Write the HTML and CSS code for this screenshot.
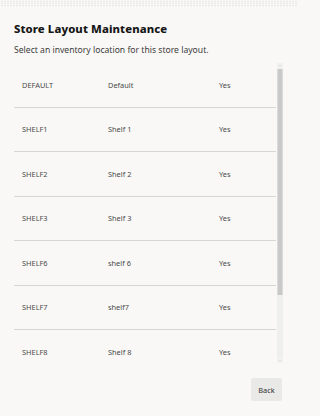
FILE: index.html
```html
<!DOCTYPE html>
<html>
<head>
<meta charset="utf-8">
<link rel="stylesheet" href="styles.css">
</head>
<body>
<div class="strip"></div>
<div class="page">
  <h1 class="title">Store Layout Maintenance</h1>
  <p class="subtitle">Select an inventory location for this store layout.</p>
  <div class="listwrap">
    <div class="list">
      <div class="row"><span class="c1">DEFAULT</span><span class="c2">Default</span><span class="c3">Yes</span></div>
      <div class="row"><span class="c1">SHELF1</span><span class="c2">Shelf 1</span><span class="c3">Yes</span></div>
      <div class="row"><span class="c1">SHELF2</span><span class="c2">Shelf 2</span><span class="c3">Yes</span></div>
      <div class="row"><span class="c1">SHELF3</span><span class="c2">Shelf 3</span><span class="c3">Yes</span></div>
      <div class="row"><span class="c1">SHELF6</span><span class="c2">shelf 6</span><span class="c3">Yes</span></div>
      <div class="row"><span class="c1">SHELF7</span><span class="c2">shelf7</span><span class="c3">Yes</span></div>
      <div class="row"><span class="c1">SHELF8</span><span class="c2">Shelf 8</span><span class="c3">Yes</span></div>
    </div>
    <div class="scrollbar">
      <div class="sbtn up"></div>
      <div class="track"><div class="thumb"></div></div>
      <div class="sbtn down"></div>
    </div>
  </div>
  <div class="actions">
    <button class="back">Back</button>
  </div>
</div>
</body>
</html>
```
FILE: styles.css
```css
html, body {
  margin: 0;
  padding: 0;
}
html {
  background: #f9f8f6;
}
body {
  background: #f9f8f6;
  font-family: "Noto Sans", "Open Sans", sans-serif;
  color: #333;
  width: 297px;
  height: 416px;
  overflow: hidden;
}
.strip {
  height: 7px;
  background-color: #ebeae8;
  background-image: repeating-linear-gradient(90deg, rgba(255,255,255,0.6) 0 1px, transparent 1px 3px),
                    repeating-linear-gradient(0deg, rgba(255,255,255,0.5) 0 1px, transparent 1px 2px);
}
.page {
  padding: 0 14px 0 14px;
}
.title {
  margin: 14px 0 0 0;
  font-size: 11.3px;
  font-weight: 800;
  color: #161616;
  line-height: 16px;
  letter-spacing: 0.1px;
}
.subtitle {
  margin: 7px 0 0 0;
  font-size: 8.6px;
  line-height: 12px;
  color: #3c3c3c;
}
.listwrap {
  margin-top: 7px;
  display: flex;
  height: 300px;
}
.list {
  flex: 1;
  overflow: hidden;
}
.row {
  display: flex;
  align-items: center;
  height: 43.5px;
  border-bottom: 1px solid #d6d6d4;
  font-size: 7.4px;
  color: #4a4a4a;
}
.c1 {
  width: 86px;
  padding-left: 8px;
}
.c2 {
  width: 111px;
}
.c3 {
  flex: 1;
}
.scrollbar {
  width: 6px;
  margin-left: 1px;
  display: flex;
  flex-direction: column;
  background: #efefee;
}
.sbtn {
  height: 6px;
  background: #f1f1f0;
  position: relative;
}
.sbtn.up::after, .sbtn.down::after {
  content: "";
  position: absolute;
  left: 2px;
  width: 0;
  height: 0;
  border-left: 1px solid transparent;
  border-right: 1px solid transparent;
}
.sbtn.up::after {
  top: 2px;
  border-bottom: 1px solid #c4c4c4;
}
.sbtn.down::after {
  top: 3px;
  border-top: 1px solid #c4c4c4;
}
.track {
  flex: 1;
}
.thumb {
  height: 226px;
  background: #c9c9c9;
  border-left: 1px solid #dadada;
  border-right: 1px solid #dadada;
  box-sizing: border-box;
}
.actions {
  display: flex;
  justify-content: flex-end;
  margin-top: 15px;
}
.back {
  width: 31px;
  height: 23px;
  margin-right: 1px;
  border: none;
  border-radius: 2px;
  background: #e9e9e8;
  font-family: "Noto Sans", "Open Sans", sans-serif;
  font-size: 7.4px;
  color: #333;
  padding: 0;
}
```
